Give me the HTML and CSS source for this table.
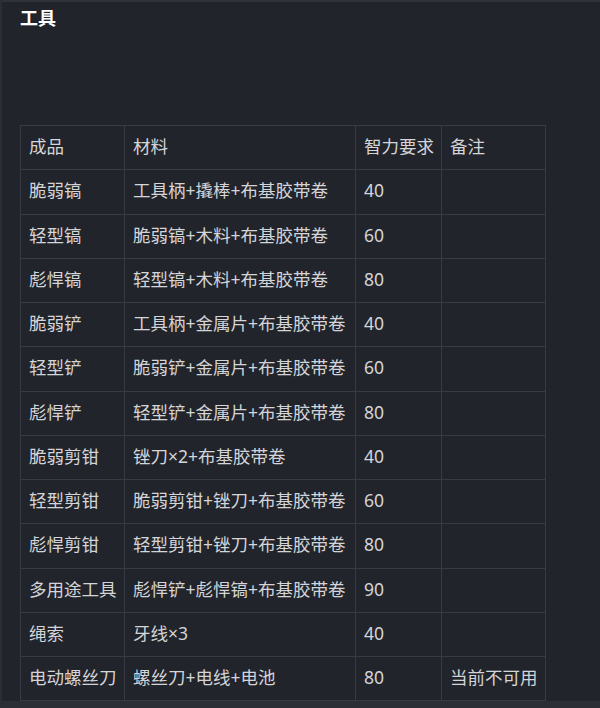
FILE: index.html
```html
<!DOCTYPE html>
<html lang="zh">
<head>
<meta charset="utf-8">
<link rel="stylesheet" href="styles.css">
</head>
<body>
<div class="page">
  <h3 class="title">工具</h3>
  <table class="grid">
    <colgroup>
      <col class="c1"><col class="c2"><col class="c3"><col class="c4">
    </colgroup>
    <tr><td>成品</td><td>材料</td><td>智力要求</td><td>备注</td></tr>
    <tr><td>脆弱镐</td><td>工具柄+撬棒+布基胶带卷</td><td>40</td><td></td></tr>
    <tr><td>轻型镐</td><td>脆弱镐+木料+布基胶带卷</td><td>60</td><td></td></tr>
    <tr><td>彪悍镐</td><td>轻型镐+木料+布基胶带卷</td><td>80</td><td></td></tr>
    <tr><td>脆弱铲</td><td>工具柄+金属片+布基胶带卷</td><td>40</td><td></td></tr>
    <tr><td>轻型铲</td><td>脆弱铲+金属片+布基胶带卷</td><td>60</td><td></td></tr>
    <tr><td>彪悍铲</td><td>轻型铲+金属片+布基胶带卷</td><td>80</td><td></td></tr>
    <tr><td>脆弱剪钳</td><td>锉刀×2+布基胶带卷</td><td>40</td><td></td></tr>
    <tr><td>轻型剪钳</td><td>脆弱剪钳+锉刀+布基胶带卷</td><td>60</td><td></td></tr>
    <tr><td>彪悍剪钳</td><td>轻型剪钳+锉刀+布基胶带卷</td><td>80</td><td></td></tr>
    <tr><td>多用途工具</td><td>彪悍铲+彪悍镐+布基胶带卷</td><td>90</td><td></td></tr>
    <tr><td>绳索</td><td>牙线×3</td><td>40</td><td></td></tr>
    <tr><td>电动螺丝刀</td><td>螺丝刀+电线+电池</td><td>80</td><td>当前不可用</td></tr>
  </table>
</div>
</body>
</html>
```
FILE: styles.css
```css
html, body {
  margin: 0;
  padding: 0;
  background: #2c2e36;
}
body {
  width: 600px;
  height: 708px;
  overflow: hidden;
}
.page {
  box-sizing: border-box;
  width: 598px;
  height: 701px;
  margin-left: 2px;
  border-top: 2px solid #30323a;
  background: #22242b;
  padding: 0 0 0 18px;
  font-family: "Noto Sans", "Noto Sans CJK SC", sans-serif;
  color: #d4d5d8;
}
.title {
  margin: 0;
  padding-top: 4px;
  height: 119px;
  font-size: 18px;
  line-height: 24px;
  font-weight: 700;
  color: #ffffff;
}
.grid {
  border-collapse: collapse;
  table-layout: fixed;
  width: 525px;
  font-size: 17.5px;
}
.c1 { width: 104px; }
.c2 { width: 231px; }
.c3 { width: 86px; }
.c4 { width: 104px; }
.grid td {
  border: 1px solid #393b44;
  height: 40.25px;
  padding: 0 0 3px 8px;
  line-height: 20px;
  white-space: nowrap;
  vertical-align: middle;
}
```
